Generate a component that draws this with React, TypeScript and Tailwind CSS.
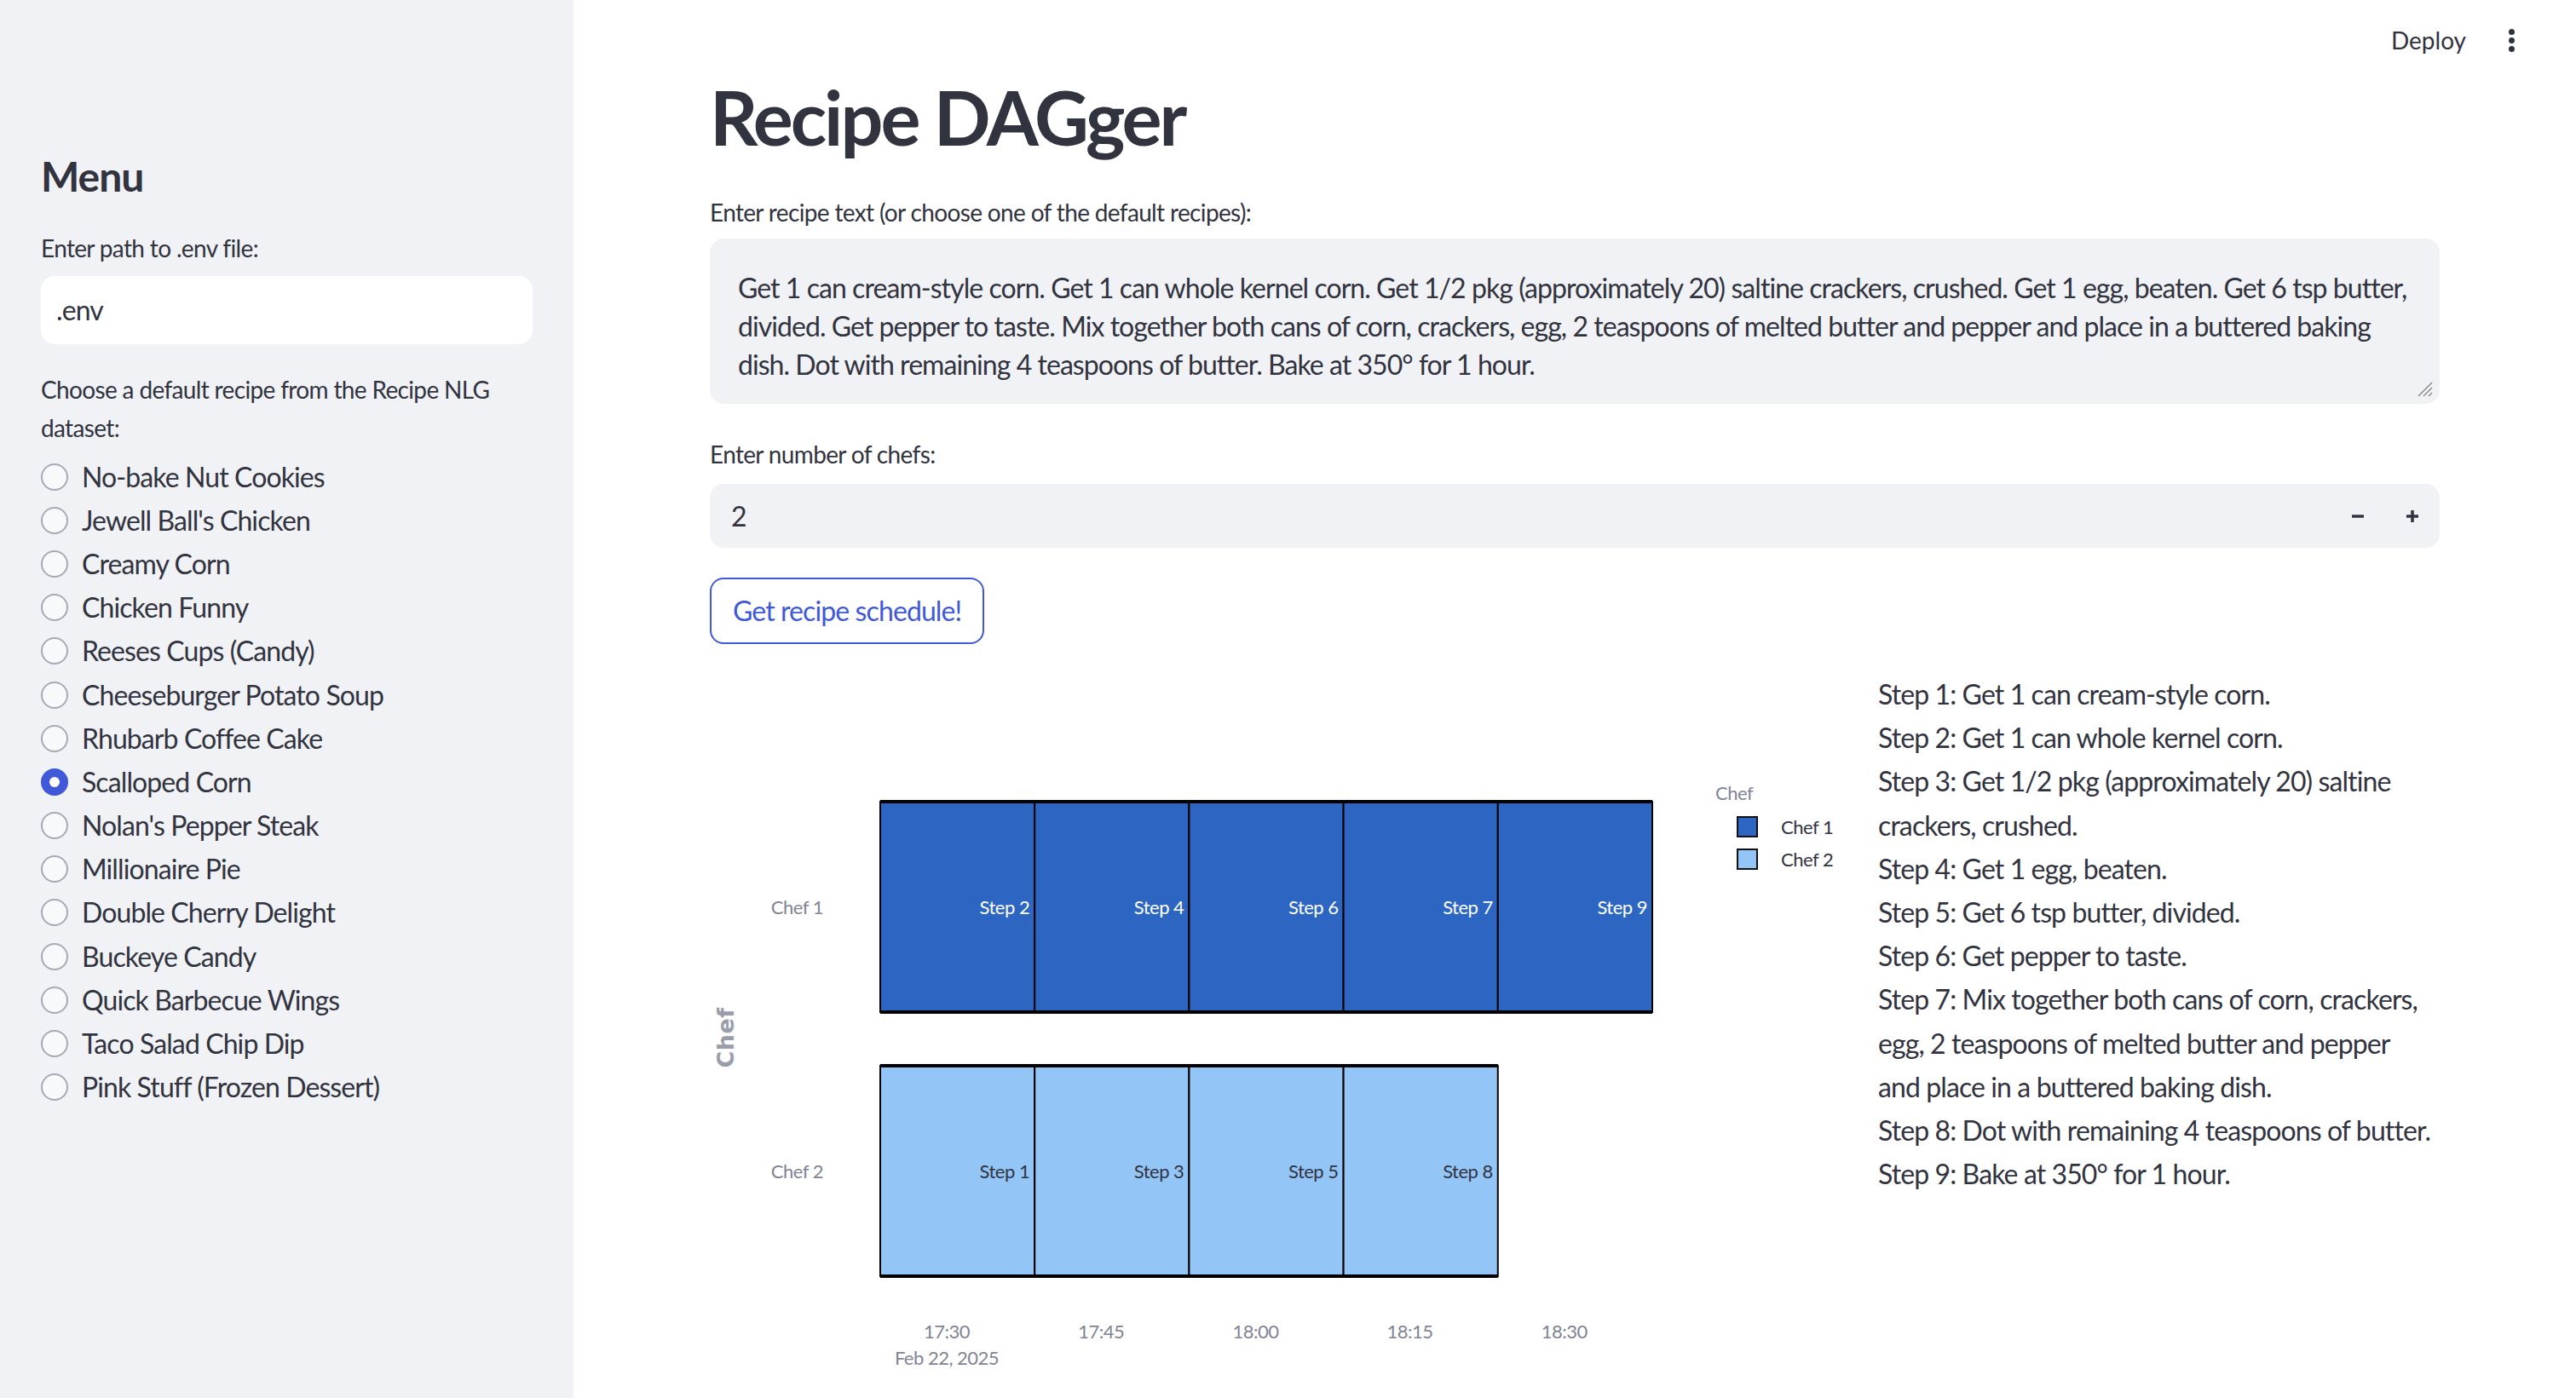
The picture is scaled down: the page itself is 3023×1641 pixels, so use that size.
import React from 'react';

const RECIPES = [
  'No-bake Nut Cookies',
  "Jewell Ball's Chicken",
  'Creamy Corn',
  'Chicken Funny',
  'Reeses Cups (Candy)',
  'Cheeseburger Potato Soup',
  'Rhubarb Coffee Cake',
  'Scalloped Corn',
  "Nolan's Pepper Steak",
  'Millionaire Pie',
  'Double Cherry Delight',
  'Buckeye Candy',
  'Quick Barbecue Wings',
  'Taco Salad Chip Dip',
  'Pink Stuff (Frozen Dessert)',
];

const RECIPE_LINES = [
  'Get 1 can cream-style corn. Get 1 can whole kernel corn. Get 1/2 pkg (approximately 20) saltine crackers, crushed. Get 1 egg, beaten. Get 6 tsp butter,',
  'divided. Get pepper to taste. Mix together both cans of corn, crackers, egg, 2 teaspoons of melted butter and pepper and place in a buttered baking',
  'dish. Dot with remaining 4 teaspoons of butter. Bake at 350° for 1 hour.',
];

// each step is a list of display lines (wrapped like the reference)
const STEPS: string[][] = [
  ['Step 1: Get 1 can cream-style corn.'],
  ['Step 2: Get 1 can whole kernel corn.'],
  ['Step 3: Get 1/2 pkg (approximately 20) saltine', 'crackers, crushed.'],
  ['Step 4: Get 1 egg, beaten.'],
  ['Step 5: Get 6 tsp butter, divided.'],
  ['Step 6: Get pepper to taste.'],
  ['Step 7: Mix together both cans of corn, crackers,', 'egg, 2 teaspoons of melted butter and pepper', 'and place in a buttered baking dish.'],
  ['Step 8: Dot with remaining 4 teaspoons of butter.'],
  ['Step 9: Bake at 350° for 1 hour.'],
];

const CHEF1 = [2, 4, 6, 7, 9];
const CHEF2 = [1, 3, 5, 8];
const TICKS = ['17:30', '17:45', '18:00', '18:15', '18:30'];

const FONT = 'Lato, "Noto Sans", sans-serif';

const RadioItem: React.FC<{ label: string; checked: boolean }> = ({ label, checked }) => (
  <div className="flex items-center h-[51.2px]">
    {checked ? (
      <span className="w-[32px] h-[32px] rounded-full bg-[#4059d8] flex items-center justify-center shrink-0">
        <span className="w-[12px] h-[12px] rounded-full bg-white" />
      </span>
    ) : (
      <span className="w-[32px] h-[32px] rounded-full border-[2px] border-[#a6a9b6] bg-[#f8f9fb] shrink-0" />
    )}
    <span className="ml-[16px] text-[32px] text-[#31333f] whitespace-nowrap">{label}</span>
  </div>
);

const ScheduleChart: React.FC = () => {
  const x0 = 200;
  const w = 181.2;
  const rows = [
    { steps: CHEF1, y: 152, fill: '#2c66c2', text: '#ffffff', label: 'Chef 1' },
    { steps: CHEF2, y: 462, fill: '#93c5f7', text: '#31333f', label: 'Chef 2' },
  ];
  const h = 247;
  return (
    <svg width="1339" height="852" viewBox="0 0 1339 852" style={{ fontFamily: FONT, letterSpacing: '-0.5px' }}>
      {rows.map((r) => (
        <g key={r.label}>
          <text x={133} y={r.y + h / 2 + 8} textAnchor="end" fontSize="22" fill="#808495">
            {r.label}
          </text>
          {r.steps.map((s, i) => (
            <g key={s}>
              <rect x={x0 + i * w} y={r.y} width={w} height={h} fill={r.fill} stroke="#000" strokeWidth="2" />
              <text x={x0 + (i + 1) * w - 6} y={r.y + h / 2 + 8} textAnchor="end" fontSize="22" fill={r.text}>
                {`Step ${s}`}
              </text>
            </g>
          ))}
          <line x1={x0} x2={x0 + r.steps.length * w} y1={r.y} y2={r.y} stroke="#000" strokeWidth="4" />
          <line x1={x0} x2={x0 + r.steps.length * w} y1={r.y + h} y2={r.y + h} stroke="#000" strokeWidth="4" />
        </g>
      ))}
      <text
        x={0}
        y={0}
        textAnchor="middle"
        fontSize="27"
        fontWeight="600"
        fill="#9a9daa"
        transform="translate(28 429) rotate(-90)"
        style={{ fontFamily: '"DejaVu Sans", sans-serif', letterSpacing: '0.5px' }}
      >
        Chef
      </text>
      {TICKS.map((t, i) => (
        <text key={t} x={278 + i * w} y={782} textAnchor="middle" fontSize="22" fill="#808495">
          {t}
        </text>
      ))}
      <text x={278} y={813} textAnchor="middle" fontSize="22" fill="#808495">
        Feb 22, 2025
      </text>
      <text x={1180} y={150} fontSize="22" fill="#808495">
        Chef
      </text>
      <rect x={1206} y={170} width={23} height={23} fill="#2c66c2" stroke="#111" strokeWidth="2" />
      <text x={1257} y={190} fontSize="22" fill="#31333f">
        Chef 1
      </text>
      <rect x={1206} y={208} width={23} height={23} fill="#93c5f7" stroke="#111" strokeWidth="2" />
      <text x={1257} y={228} fontSize="22" fill="#31333f">
        Chef 2
      </text>
    </svg>
  );
};

export default function App() {
  return (
    <div
      className="flex w-full h-[1641px] overflow-hidden bg-white text-[#31333f] tracking-[-0.9px]"
      style={{ fontFamily: FONT }}
    >
      {/* Sidebar */}
      <aside className="w-[673px] shrink-0 bg-[#f0f2f6] px-[48px] pt-[178px]">
        <h2 className="text-[48px] leading-[58px] font-bold tracking-[-1px]">Menu</h2>
        <div className="mt-[33px] text-[28px] leading-[45px] tracking-[-0.65px]">Enter path to .env file:</div>
        <div className="mt-[10px] h-[80px] rounded-[16px] bg-white flex items-center px-[18px] text-[32px]">.env</div>
        <div className="mt-[31px] text-[28px] leading-[45px] tracking-[-0.65px]">
          Choose a default recipe from the Recipe NLG
          <br />
          dataset:
        </div>
        <div className="mt-[9px] flex flex-col">
          {RECIPES.map((r) => (
            <RadioItem key={r} label={r} checked={r === 'Scalloped Corn'} />
          ))}
        </div>
      </aside>

      {/* Main */}
      <main className="flex-1 min-w-0 flex flex-col">
        <header className="h-[100px] flex items-center justify-end pr-[72px]">
          <span className="text-[28px] mr-[50px] tracking-normal">Deploy</span>
          <span className="flex flex-col gap-[3px]">
            <span className="w-[7px] h-[7px] rounded-full bg-[#31333f]" />
            <span className="w-[7px] h-[7px] rounded-full bg-[#31333f]" />
            <span className="w-[7px] h-[7px] rounded-full bg-[#31333f]" />
          </span>
        </header>

        <div className="px-[160px]">
          <h1 className="text-[88px] leading-[86px] font-bold tracking-[-3px]">Recipe DAGger</h1>

          <div className="mt-[47px] text-[28px] leading-[45px] tracking-[-0.65px]">
            Enter recipe text (or choose one of the default recipes):
          </div>
          <div className="relative mt-[8px] h-[194px] overflow-hidden rounded-[16px] bg-[#f0f2f6] px-[33px] pt-[36px] text-[32px] leading-[44.8px] tracking-[-0.95px]">
            {RECIPE_LINES.map((l) => (
              <div key={l} className="whitespace-nowrap">{l}</div>
            ))}
            <svg className="absolute right-[8px] bottom-[8px]" width="20" height="20" viewBox="0 0 20 20">
              <line x1="19" y1="3" x2="3" y2="19" stroke="#888" strokeWidth="1.5" />
              <line x1="19" y1="9" x2="9" y2="19" stroke="#888" strokeWidth="1.5" />
              <line x1="19" y1="15" x2="15" y2="19" stroke="#888" strokeWidth="1.5" />
            </svg>
          </div>

          <div className="mt-[37px] text-[28px] leading-[45px] tracking-[-0.65px]">Enter number of chefs:</div>
          <div className="mt-[12px] h-[75px] rounded-[16px] bg-[#f0f2f6] flex items-center">
            <span className="flex-1 pl-[25px] text-[32px]">2</span>
            <span className="w-[64px] h-full flex items-center justify-center">
              <svg width="20" height="20" viewBox="0 0 20 20">
                <line x1="3" y1="10" x2="17" y2="10" stroke="#31333f" strokeWidth="3.5" />
              </svg>
            </span>
            <span className="w-[64px] h-full flex items-center justify-center">
              <svg width="20" height="20" viewBox="0 0 20 20">
                <line x1="3" y1="10" x2="17" y2="10" stroke="#31333f" strokeWidth="3.5" />
                <line x1="10" y1="3" x2="10" y2="17" stroke="#31333f" strokeWidth="3.5" />
              </svg>
            </span>
          </div>

          <button className="mt-[35px] h-[78px] px-[25px] rounded-[16px] border-[2px] border-[#4059d8] bg-white text-[32px] text-[#4059d8]">
            Get recipe schedule!
          </button>

          <div className="mt-[33px] grid grid-cols-[1339px_1fr] gap-[32px]">
            <ScheduleChart />
            <div className="text-[32px] leading-[51.2px]">
              {STEPS.map((s) => (
                <div key={s[0]}>
                  {s.map((l) => (
                    <div key={l} className="whitespace-nowrap">{l}</div>
                  ))}
                </div>
              ))}
            </div>
          </div>
        </div>
      </main>
    </div>
  );
}
